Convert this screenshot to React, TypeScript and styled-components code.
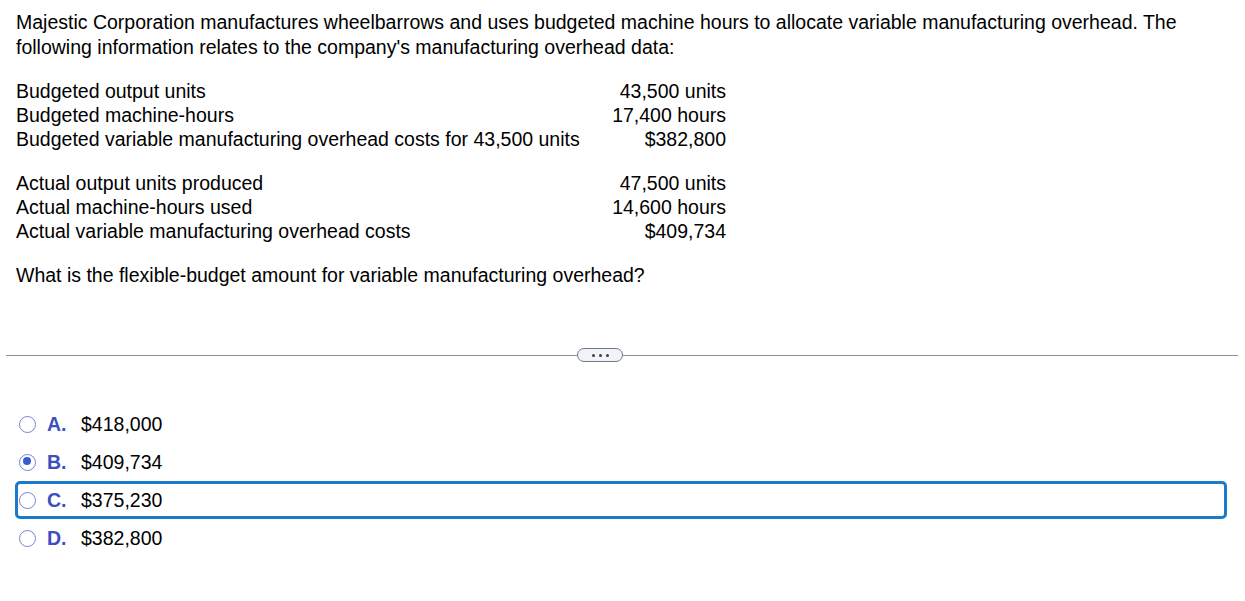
import React, { useState } from "react";
import styled, { createGlobalStyle } from "styled-components";

const GlobalStyle = createGlobalStyle`
  html, body {
    margin: 0;
    padding: 0;
    background: #ffffff;
  }
  body {
    font-family: "Liberation Sans", Arial, sans-serif;
    font-size: 19.5px;
    color: #000000;
  }
`;

type Row = { label: string; value: string };

const budgeted: Row[] = [
  { label: "Budgeted output units", value: "43,500 units" },
  { label: "Budgeted machine-hours", value: "17,400 hours" },
  {
    label: "Budgeted variable manufacturing overhead costs for 43,500 units",
    value: "$382,800",
  },
];

const actual: Row[] = [
  { label: "Actual output units produced", value: "47,500 units" },
  { label: "Actual machine-hours used", value: "14,600 hours" },
  { label: "Actual variable manufacturing overhead costs", value: "$409,734" },
];

const choices = [
  { key: "A", value: "$418,000" },
  { key: "B", value: "$409,734" },
  { key: "C", value: "$375,230" },
  { key: "D", value: "$382,800" },
];

const App = () => {
  const [selected, setSelected] = useState("B");
  const focused = "C";

  return (
    <Page>
      <GlobalStyle />
      <Question>
        <Intro>
          Majestic Corporation manufactures wheelbarrows and uses budgeted
          machine hours to allocate variable manufacturing overhead. The
          following information relates to the company's manufacturing
          overhead data:
        </Intro>
        <DataTable>
          {budgeted.map((r) => (
            <React.Fragment key={r.label}>
              <Cell>{r.label}</Cell>
              <Value>{r.value}</Value>
            </React.Fragment>
          ))}
        </DataTable>
        <DataTable>
          {actual.map((r) => (
            <React.Fragment key={r.label}>
              <Cell>{r.label}</Cell>
              <Value>{r.value}</Value>
            </React.Fragment>
          ))}
        </DataTable>
        <Prompt>
          What is the flexible-budget amount for variable manufacturing
          overhead?
        </Prompt>
      </Question>

      <Divider>
        <Rule $lead />
        <MoreButton aria-label="more">
          <Dot />
          <Dot />
          <Dot />
        </MoreButton>
        <Rule />
      </Divider>

      <Choices>
        {choices.map((c) => (
          <Choice
            key={c.key}
            $focused={c.key === focused}
            onClick={() => setSelected(c.key)}
          >
            <Radio $checked={c.key === selected} />
            <Letter>{c.key}.</Letter>
            <Amount>{c.value}</Amount>
          </Choice>
        ))}
      </Choices>
    </Page>
  );
};

const Page = styled.div`
  width: 1245px;
  padding-top: 10px;
`;

const Question = styled.div`
  padding: 0 16px;
`;

const Intro = styled.p`
  margin: 0 0 19px;
  line-height: 25px;
`;

const DataTable = styled.div`
  display: grid;
  grid-template-columns: 1fr auto;
  width: 710px;
  line-height: 24px;
  margin-bottom: 20px;
`;

const Cell = styled.div`
  white-space: nowrap;
`;

const Value = styled.div`
  text-align: right;
  white-space: nowrap;
`;

const Prompt = styled.p`
  margin: 0;
  line-height: 24px;
`;

const Divider = styled.div`
  display: flex;
  align-items: center;
  margin: 61px 7px 0 6px;
  height: 14px;
`;

const Rule = styled.div<{ $lead?: boolean }>`
  height: 1px;
  background: #8a909c;
  ${({ $lead }) => ($lead ? "width: 571px;" : "flex: 1;")}
`;

const MoreButton = styled.button`
  display: flex;
  align-items: center;
  justify-content: center;
  gap: 4px;
  width: 46px;
  height: 14px;
  padding: 0;
  border: 1.5px solid #6e7a8c;
  border-radius: 7px;
  background: #f1f3f6;
  box-sizing: border-box;
`;

const Dot = styled.span`
  width: 3px;
  height: 3px;
  border-radius: 50%;
  background: #3a3f48;
`;

const Choices = styled.div`
  display: flex;
  flex-direction: column;
  margin-top: 43px;
  padding-left: 15px;
  width: 1212px;
`;

const Choice = styled.label<{ $focused: boolean }>`
  display: flex;
  align-items: center;
  height: 38px;
  box-sizing: border-box;
  border: 3px solid ${({ $focused }) => ($focused ? "#1a7acb" : "transparent")};
  border-radius: 5px;
  padding-left: 1px;
  cursor: pointer;
`;

const Radio = styled.span<{ $checked: boolean }>`
  position: relative;
  width: 17px;
  height: 17px;
  box-sizing: border-box;
  border-radius: 50%;
  border: 1.6px solid #7483d6;
  background: #ffffff;
  flex: none;

  &::after {
    content: "";
    display: ${({ $checked }) => ($checked ? "block" : "none")};
    position: absolute;
    left: 2.9px;
    top: 2.9px;
    width: 8px;
    height: 8px;
    border-radius: 50%;
    background: #3a5ad2;
  }
`;

const Letter = styled.span`
  margin-left: 11px;
  width: 34px;
  font-weight: bold;
  color: #3d4ec0;
`;

const Amount = styled.span`
  color: #000000;
`;

export default App;
